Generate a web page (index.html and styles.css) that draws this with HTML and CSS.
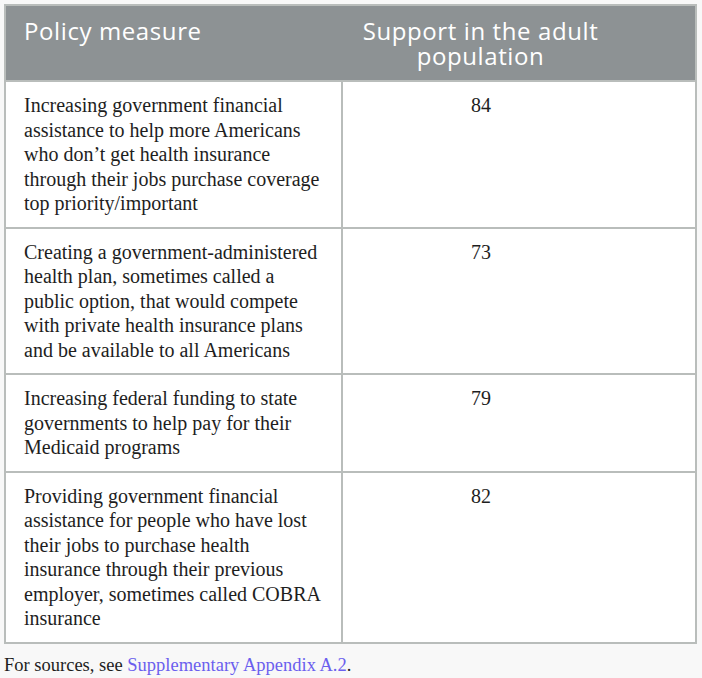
FILE: index.html
```html
<!DOCTYPE html>
<html lang="en">

<head>
    <meta charset="UTF-8">
    <meta name="viewport" content="width=device-width, initial-scale=1.0">
    <title>Policy measures</title>
    <link rel="stylesheet" href="styles.css">
</head>

<body>
    <div class="wrap">
        <table class="policy-table">
            <thead>
                <tr>
                    <th class="col-measure">Policy measure</th>
                    <th class="col-support">Support in the adult population</th>
                </tr>
            </thead>
            <tbody>
                <tr>
                    <td class="col-measure">Increasing government financial assistance to help more Americans who don’t get health insurance through their jobs purchase coverage top priority/important</td>
                    <td class="col-support">84</td>
                </tr>
                <tr>
                    <td class="col-measure">Creating a government-administered health plan, sometimes called a public option, that would compete with private health insurance plans and be available to all Americans</td>
                    <td class="col-support">73</td>
                </tr>
                <tr>
                    <td class="col-measure">Increasing federal funding to state governments to help pay for their Medicaid programs</td>
                    <td class="col-support">79</td>
                </tr>
                <tr>
                    <td class="col-measure">Providing government financial assistance for people who have lost their jobs to purchase health insurance through their previous employer, sometimes called COBRA insurance</td>
                    <td class="col-support">82</td>
                </tr>
            </tbody>
        </table>
        <p class="note">For sources, see <a href="#">Supplementary Appendix A.2</a>.</p>
    </div>
</body>

</html>
```

FILE: styles.css
```css
:root {
    --head: #8d9294;
    --line: #b9bdbb;
    --text: #1e1e1e;
    --link: #6b5fee;
}

* {
    margin: 0;
    padding: 0;
    box-sizing: border-box;
}

body {
    background: #f8f8f8;
    color: var(--text);
    font-family: 'Liberation Serif', serif;
}

.wrap {
    padding: 4px 5px 0 4px;
}

.policy-table {
    width: 693px;
    border-collapse: collapse;
    background: #fff;
    border: 2px solid var(--line);
}

.policy-table th {
    background: var(--head);
    color: #fff;
    font-family: 'Open Sans', sans-serif;
    font-weight: 400;
    font-size: 24px;
    letter-spacing: 0.6px;
    line-height: 25px;
    height: 76px;
    vertical-align: top;
    padding: 12px 16px 0 18px;
    border-bottom: 2px solid var(--line);
    text-align: left;
}

.policy-table th.col-support {
    text-align: center;
    padding: 12px 84px 0 8px;
}

.policy-table td {
    font-size: 20px;
    line-height: 24.5px;
    vertical-align: top;
    padding: 11px 16px 11px 18px;
    border: 2px solid var(--line);
}

.col-measure {
    width: 337px;
}

.policy-table td.col-support {
    text-align: center;
    padding: 11px 98px 11px 22px;
}

.note {
    font-size: 18.5px;
    line-height: 24px;
    padding: 9px 0 0 0;
}

.note a {
    color: var(--link);
    text-decoration: none;
}
```
